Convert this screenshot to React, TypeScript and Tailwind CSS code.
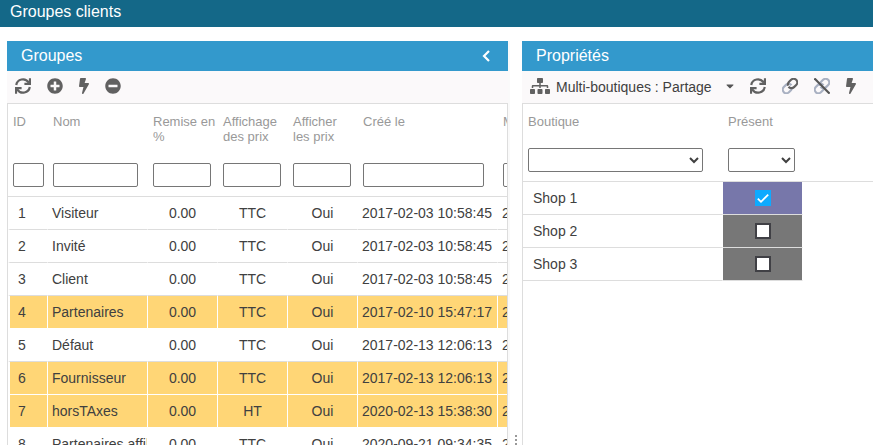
import { useState } from 'react';
import type { ReactNode } from 'react';
import { FaBolt, FaCaretDown, FaMinusCircle, FaPlusCircle, FaSitemap } from 'react-icons/fa';

type Group = {
    id: number;
    name: string;
    discount: string;
    display: string;
    show: string;
    created: string;
    highlighted?: boolean;
};

const groups: Group[] = [
    { id: 1, name: 'Visiteur', discount: '0.00', display: 'TTC', show: 'Oui', created: '2017-02-03 10:58:45' },
    { id: 2, name: 'Invité', discount: '0.00', display: 'TTC', show: 'Oui', created: '2017-02-03 10:58:45' },
    { id: 3, name: 'Client', discount: '0.00', display: 'TTC', show: 'Oui', created: '2017-02-03 10:58:45' },
    { id: 4, name: 'Partenaires', discount: '0.00', display: 'TTC', show: 'Oui', created: '2017-02-10 15:47:17', highlighted: true },
    { id: 5, name: 'Défaut', discount: '0.00', display: 'TTC', show: 'Oui', created: '2017-02-13 12:06:13' },
    { id: 6, name: 'Fournisseur', discount: '0.00', display: 'TTC', show: 'Oui', created: '2017-02-13 12:06:13', highlighted: true },
    { id: 7, name: 'horsTAxes', discount: '0.00', display: 'HT', show: 'Oui', created: '2020-02-13 15:38:30', highlighted: true },
    { id: 8, name: 'Partenaires affiliés', discount: '0.00', display: 'TTC', show: 'Oui', created: '2020-09-21 09:34:35' },
];

const columns = [
    { label: 'ID', width: 'w-[40px]', pad: 'pr-1' },
    { label: 'Nom', width: 'w-[100px]', pad: 'pr-[10px]' },
    { label: 'Remise en %', width: 'w-[70px]', pad: 'pr-[7px]' },
    { label: 'Affichage des prix', width: 'w-[70px]', pad: 'pr-[7px]' },
    { label: 'Afficher les prix', width: 'w-[70px]', pad: 'pr-[7px]' },
    { label: 'Créé le', width: 'w-[140px]', pad: 'pr-[14px]' },
    { label: 'Modifié le', width: 'w-[140px]', pad: 'pr-[14px]' },
];

function RefreshIcon() {
    return (
        <svg viewBox="0 0 16 16" className="size-4" fill="none" stroke="currentColor" strokeWidth="2.2">
            <path d="M1.2 7A6.8 6.8 0 0 1 13.6 4.4" />
            <path d="M14.8 9A6.8 6.8 0 0 1 2.4 11.6" />
            <path d="M15 0.2V5.8H9.4" />
            <path d="M1 15.8V10.2H6.6" />
            <path d="M15 2.5V5.8H11.7zM1 13.5V10.2H4.3z" fill="currentColor" stroke="none" />
        </svg>
    );
}

function LinkIcon({ broken = false }: { broken?: boolean }) {
    return (
        <svg viewBox="1 1 22 22" className="size-4" fill="none" strokeWidth="3">
            <path
                d="M14 11a5 5 0 0 0-7.54-.54l-3 3a5 5 0 0 0 7.07 7.07l3-3a5 5 0 0 0 1-3"
                stroke="#a9b1c2"
            />
            <path
                d="M10 13a5 5 0 0 0 7.54.54l3-3a5 5 0 0 0-7.07-7.07l-3 3a5 5 0 0 0-1 5"
                stroke={broken ? '#a9b1c2' : '#616161'}
            />
            {broken && <path d="M1.5 1.5L22.5 22.5" stroke="#555" strokeWidth="3" />}
        </svg>
    );
}

function ToolButton({ label, children }: { label: string; children: ReactNode }) {
    return (
        <button type="button" aria-label={label} className="flex h-6 items-center justify-center text-[#616161]">
            {children}
        </button>
    );
}

function PanelHeader({ title, children }: { title: string; children?: ReactNode }) {
    return (
        <div className="flex h-[30px] items-center justify-between bg-[#3399cc] pr-[18px] pl-[14px] text-white">
            <h2 className="text-base">{title}</h2>
            {children}
        </div>
    );
}

function GroupsTable() {
    return (
        <table className="w-[630px] table-fixed border-separate border-spacing-0">
            <thead className="text-left align-top text-[13px] leading-[15px] text-[#999]">
                <tr>
                    {columns.map((col) => (
                        <th key={col.label} className={`${col.width} pt-[10px] pr-[2px] pb-[19px] pl-[5px] align-top font-normal`}>
                            {col.label}
                        </th>
                    ))}
                </tr>
                <tr>
                    {columns.map((col) => (
                        <td key={col.label} className={`border-b border-[#ddd] pb-[9px] pl-[5px] ${col.pad}`}>
                            <input
                                type="text"
                                aria-label={col.label}
                                className="block h-6 w-full rounded-xs border border-[#767676] bg-white px-1 text-[#404040]"
                            />
                        </td>
                    ))}
                </tr>
            </thead>
            <tbody className="text-sm text-[#404040]">
                {groups.map((g) => {
                    const cell = `h-[33px] overflow-hidden whitespace-nowrap border-r border-b border-r-white ${
                        g.highlighted ? 'border-b-white bg-[#ffd676]' : 'border-b-[#ddd]'
                    }`;
                    return (
                        <tr key={g.id}>
                            <td className={`${cell} border-l-2 border-l-white pl-2`}>{g.id}</td>
                            <td className={`${cell} pl-1`}>{g.name}</td>
                            <td className={`${cell} text-center`}>{g.discount}</td>
                            <td className={`${cell} text-center`}>{g.display}</td>
                            <td className={`${cell} text-center`}>{g.show}</td>
                            <td className={`${cell} pl-1`}>{g.created}</td>
                            <td className={`${cell} pl-1`}>{g.created}</td>
                        </tr>
                    );
                })}
            </tbody>
        </table>
    );
}

function ShopsTable() {
    const [shops, setShops] = useState([
        { name: 'Shop 1', present: true },
        { name: 'Shop 2', present: false },
        { name: 'Shop 3', present: false },
    ]);

    const toggle = (name: string) =>
        setShops(shops.map((s) => (s.name === name ? { ...s, present: !s.present } : s)));

    return (
        <table className="w-full table-fixed border-separate border-spacing-0">
            <thead className="text-left text-[13px] leading-[15px] text-[#999]">
                <tr>
                    <th className="w-[200px] pt-[10px] pb-[19px] pl-[5px] font-normal">Boutique</th>
                    <th className="w-[80px] pt-[10px] pb-[19px] pl-[5px] font-normal">Présent</th>
                    <td />
                </tr>
                <tr>
                    <td className="border-b border-[#ddd] pr-5 pb-[9px] pl-[5px]">
                        <select aria-label="Boutique" className="block h-6 w-full rounded-xs border border-[#767676] bg-white text-[#404040]" />
                    </td>
                    <td className="border-b border-[#ddd] pr-2 pb-[9px] pl-[5px]">
                        <select aria-label="Présent" className="block h-6 w-full rounded-xs border border-[#767676] bg-white text-[#404040]" />
                    </td>
                    <td className="border-b border-[#ddd]" />
                </tr>
            </thead>
            <tbody className="text-sm text-[#404040]">
                {shops.map((s) => (
                    <tr key={s.name}>
                        <td className="h-[33px] border-r border-b border-r-white border-b-[#ddd] pl-[10px]">{s.name}</td>
                        <td
                            className={`h-[33px] border-r border-b border-r-white border-b-[#ddd] ${
                                s.present ? 'bg-[#7777aa]' : 'bg-[#777777]'
                            }`}
                        >
                            <label className="relative mx-auto block size-4">
                                <input
                                    type="checkbox"
                                    aria-label={s.name}
                                    checked={s.present}
                                    onChange={() => toggle(s.name)}
                                    className="block size-4 appearance-none border-2 border-[#404045] bg-white checked:border-[#0eaaff] checked:bg-[#0eaaff]"
                                />
                                {s.present && (
                                    <svg viewBox="0 0 16 16" className="pointer-events-none absolute inset-0 size-4" fill="none" stroke="white" strokeWidth="1.8">
                                        <path d="M2.8 8.6L6 11.8L13.2 4.6" />
                                    </svg>
                                )}
                            </label>
                        </td>
                        <td />
                    </tr>
                ))}
            </tbody>
        </table>
    );
}

export default function App() {
    return (
        <div className="flex h-screen flex-col overflow-hidden bg-white font-['Liberation_Sans',Arial,sans-serif]">
            <header className="flex h-[27px] shrink-0 items-center bg-[#146888] px-[10px] pb-1 text-white">
                <h1 className="text-base">Groupes clients</h1>
            </header>

            <main className="flex min-h-0 flex-1 pt-[14px] pl-[7px]">
                <section className="flex min-w-0 flex-[501] flex-col">
                    <PanelHeader title="Groupes">
                        <button type="button" aria-label="Replier" className="flex h-6 items-center">
                            <svg viewBox="0 0 8 12" className="h-3 w-2" fill="none" stroke="currentColor" strokeWidth="2.2">
                                <path d="M7 1L2 6L7 11" />
                            </svg>
                        </button>
                    </PanelHeader>
                    <div className="flex h-[33px] shrink-0 items-center gap-4 border-b border-[#ddd] bg-[#fbf9fa] px-2 pb-[2px]">
                        <ToolButton label="Actualiser"><RefreshIcon /></ToolButton>
                        <ToolButton label="Ajouter"><FaPlusCircle className="size-4" /></ToolButton>
                        <ToolButton label="Action"><FaBolt className="h-4 w-[10px]" /></ToolButton>
                        <ToolButton label="Supprimer"><FaMinusCircle className="size-4" /></ToolButton>
                    </div>
                    <div className="min-h-0 flex-1 overflow-hidden border-x border-[#ddd]">
                        <GroupsTable />
                    </div>
                </section>

                {/* resize handle between the two panels */}
                <div className="flex w-[14px] shrink-0 cursor-col-resize flex-col items-center justify-end gap-[2px] border-l-2 border-[#fafafa]">
                    <span className="size-[2px] bg-[#999]" />
                    <span className="size-[2px] bg-[#999]" />
                    <span className="size-[2px] bg-[#999]" />
                </div>

                <section className="flex min-w-0 flex-[351] flex-col">
                    <PanelHeader title="Propriétés" />
                    <div className="flex h-[33px] shrink-0 items-center gap-4 overflow-hidden border-b border-[#ddd] bg-[#fbf9fa] px-2 pb-[2px]">
                        <button type="button" className="flex h-6 shrink-0 items-center gap-[6px] text-sm whitespace-nowrap text-[#404040]">
                            <FaSitemap className="h-4 w-5 text-[#616161]" />
                            <span className="pt-[2px]">Multi-boutiques : Partage</span>
                            <FaCaretDown className="ml-2 h-3 w-2 text-[#555]" />
                        </button>
                        <ToolButton label="Actualiser"><RefreshIcon /></ToolButton>
                        <ToolButton label="Associer"><LinkIcon /></ToolButton>
                        <ToolButton label="Dissocier"><LinkIcon broken /></ToolButton>
                        <ToolButton label="Action"><FaBolt className="h-4 w-[10px]" /></ToolButton>
                    </div>
                    <div className="min-h-0 flex-1 border-l border-[#ddd]">
                        <ShopsTable />
                    </div>
                </section>
            </main>
        </div>
    );
}
